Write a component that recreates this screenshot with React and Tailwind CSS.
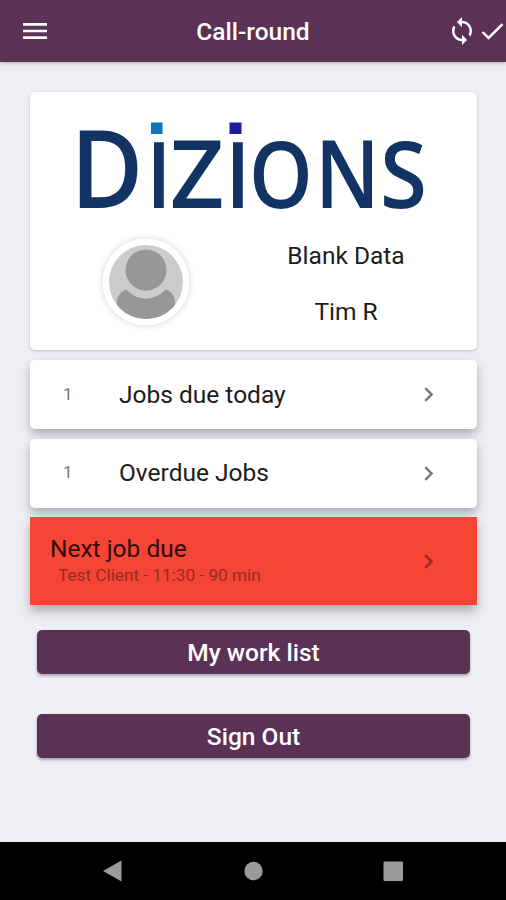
import React from 'react';
import { IoMdMenu, IoMdSync, IoMdCheckmark } from 'react-icons/io';
import { MdChevronRight } from 'react-icons/md';

const letters = [
  { char: 'D', x: 70.5, size: 108, scale: 0.92 },
  { char: 'i', x: 147, size: 122, scale: 0.7, clip: true },
  { char: 'Z', x: 170, size: 94, scale: 1 },
  { char: 'i', x: 226, size: 122, scale: 0.7, clip: true },
  { char: 'O', x: 249, size: 92, scale: 0.88 },
  { char: 'N', x: 315, size: 94, scale: 0.88 },
  { char: 'S', x: 380, size: 92, scale: 0.93 },
];

const Logo = () => (
  <svg width="447" height="128" viewBox="30 92 447 128" className="block overflow-visible">
    <defs>
      <clipPath id="stem">
        <rect x="-10" y="-67" width="80" height="120" />
      </clipPath>
    </defs>
    <g fill="#113464" fontFamily="Open Sans, sans-serif" fontWeight="550">
      {letters.map((l, i) => (
        <g key={i} transform={`translate(${l.x} 208) scale(${l.scale} 1)`} clipPath={l.clip ? 'url(#stem)' : undefined}>
          <text fontSize={l.size} fontWeight={l.clip ? 600 : undefined}>{l.char}</text>
        </g>
      ))}
    </g>
    <rect x="151" y="122.500" width="11.500" height="11.500" fill="#0b75c0" />
    <rect x="229.500" y="122.500" width="12" height="11.500" fill="#1c1c9c" />
  </svg>
);

const Avatar = () => (
  <svg width="96" height="96" viewBox="0 0 96 96" className="block overflow-visible">
    <defs>
      <clipPath id="face">
        <circle cx="48" cy="48" r="37" />
      </clipPath>
    </defs>
    <circle cx="48" cy="48" r="43.500" className="fill-white drop-shadow-[0_0_3px_rgba(0,0,0,0.18)]" />
    <circle cx="48" cy="48" r="37" fill="#cbcbcb" />
    <g clipPath="url(#face)">
      <path d="M19 68c0-5 3-10 8-12 1-.5 2 0 3 1 10 10 26 10 36 0 1-1 2-1.500 3-1 5 2 8 7 8 12v20H19z" fill="#979797" />
    </g>
    <circle cx="48" cy="36" r="20.500" fill="#979797" />
  </svg>
);

const JobRow = ({ count, label }) => (
  <div className="flex h-[69px] items-center rounded-[5px] bg-white shadow-[0_5px_10px_rgba(0,0,0,0.28)]">
    <span className="w-[89px] pl-[33px] text-[17px] text-[#777]">{count}</span>
    <span className="flex-1 pt-px text-[24.5px] text-[#1c1c1c]">{label}</span>
    <MdChevronRight className="mr-[34px] size-[29px] text-[#777]" />
  </div>
);

const Button = ({ children }) => (
  <button className="block h-11 w-full rounded-[5px] bg-[#5b3156] pt-[3px] text-[24.5px] leading-none font-medium text-white shadow-[0_2px_3px_rgba(0,0,0,0.3)]">
    {children}
  </button>
);

const App = () => {
  return (
    <div className="flex h-[900px] w-[506px] flex-col overflow-hidden bg-[#edeff5] font-['Roboto',sans-serif]">
      <header className="grid h-[62px] shrink-0 grid-cols-3 items-center bg-[#5b3156] text-white shadow-[0_1px_4px_rgba(0,0,0,0.3)]">
        <IoMdMenu className="ml-[19px] size-8" />
        <h1 className="pt-0.5 text-center text-[24.5px] leading-none font-medium">Call-round</h1>
        <div className="flex items-center justify-end">
          <IoMdSync className="size-[32px]" />
          <IoMdCheckmark className="-mr-[1px] size-[29px]" />
        </div>
      </header>

      <main className="flex flex-1 flex-col pt-[30px] pr-[29px] pl-[30px]">
        <section className="mb-[10px] h-[258px] rounded-[5px] bg-white shadow-[0_1px_3px_rgba(0,0,0,0.22)]">
          <Logo />
          <div className="flex pt-[14px]">
            <div className="w-[185px] pl-[68px]">
              <Avatar />
            </div>
            <div className="w-[262px] text-center text-[24.5px] leading-[56px] text-[#1c1c1c]">
              <p className="-mt-[6px]">Blank Data</p>
              <p>Tim R</p>
            </div>
          </div>
        </section>

        <div className="flex flex-col gap-[9.5px]">
          <JobRow count="1" label="Jobs due today" />
          <JobRow count="1" label="Overdue Jobs" />
          <div className="flex h-[88px] items-center bg-[#f64435] pl-[20px] shadow-[0_6px_10px_rgba(0,0,0,0.28)]">
            <div className="flex-1">
              <p className="text-[24.5px] leading-[28px] text-[#2c0c0a]">Next job due</p>
              <p className="pl-2 text-[17.2px] leading-6 text-[#952a22]">Test Client - 11:30 - 90 min</p>
            </div>
            <MdChevronRight className="mr-[34px] size-[29px] text-[#952a22]" />
          </div>
        </div>

        <div className="flex flex-col gap-10 px-[7px] pt-[25px]">
          <Button>My work list</Button>
          <Button>Sign Out</Button>
        </div>
      </main>

      <nav className="flex h-[58px] shrink-0 items-center bg-black">
        <svg width="506" height="58" viewBox="0 0 506 58" fill="#9b9b9b">
          <path d="M103 29L121.500 18.500V39.500z" />
          <circle cx="253.500" cy="29" r="9.200" />
          <rect x="383.500" y="19.500" width="19.500" height="19.500" rx="1" />
        </svg>
      </nav>
    </div>
  );
};

export default App;
